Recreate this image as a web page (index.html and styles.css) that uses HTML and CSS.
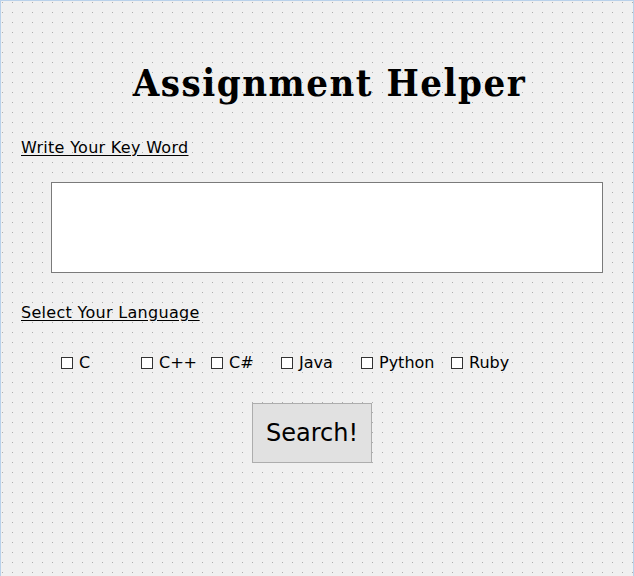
FILE: index.html
```html
<!DOCTYPE html>
<html>
<head>
<meta charset="utf-8">
<link rel="stylesheet" href="styles.css">
</head>
<body>
<div class="form">
  <h1 class="title">Assignment Helper</h1>
  <div class="label label-key">Write Your Key Word</div>
  <div class="textbox"></div>
  <div class="label label-lang">Select Your Language</div>
  <div class="langs">
    <label class="check"><span class="box"></span><span>C</span></label>
    <label class="check"><span class="box"></span><span>C++</span></label>
    <label class="check"><span class="box"></span><span>C#</span></label>
    <label class="check"><span class="box"></span><span>Java</span></label>
    <label class="check"><span class="box"></span><span>Python</span></label>
    <label class="check"><span class="box"></span><span>Ruby</span></label>
  </div>
  <div class="btn-row"><div class="button">Search!</div></div>
</div>
</body>
</html>
```
FILE: styles.css
```css
html, body {
  margin: 0;
  padding: 0;
}
body {
  width: 634px;
  height: 576px;
  overflow: hidden;
  font-family: "DejaVu Sans", sans-serif;
  color: #000;
}
.form {
  box-sizing: border-box;
  width: 634px;
  height: 576px;
  border-top: 1px solid #b9d1ea;
  border-left: 1px solid #b9d1ea;
  border-right: 1px solid #b9d1ea;
  background-color: #f0f0f0;
  background-image:
    repeating-linear-gradient(to right, transparent 0 1px, #f0f0f0 1px 10px),
    repeating-linear-gradient(to bottom, #adadad 0 1px, #f0f0f0 1px 10px);
  background-position: 1px 1px, 1px 1px;
  display: flex;
  flex-direction: column;
  align-items: flex-start;
}
.title {
  margin: 58px 0 0 0;
  align-self: stretch;
  text-align: center;
  padding-left: 25px;
  font-family: "DejaVu Serif", serif;
  font-stretch: condensed;
  font-weight: bold;
  font-size: 38px;
  line-height: 48px;
  letter-spacing: 1.5px;
}
.label {
  margin-left: 20px;
  font-size: 16px;
  line-height: 20px;
  letter-spacing: 0.3px;
  text-decoration: underline;
  text-underline-offset: 2px;
}
.label-key {
  margin-top: 31px;
}
.textbox {
  margin: 24px 0 0 50px;
  width: 550px;
  height: 89px;
  background: #fff;
  border: 1px solid #7a7a7a;
}
.label-lang {
  margin-top: 30px;
}
.langs {
  margin: 30px 0 0 60px;
  display: grid;
  grid-template-columns: 80px 70px 70px 80px 90px auto;
  font-size: 16px;
  line-height: 20px;
}
.check {
  display: flex;
  align-items: center;
  gap: 6px;
}
.box {
  width: 10px;
  height: 10px;
  border: 1px solid #333;
  background: #fff;
}
.btn-row {
  margin: 30px 0 0 251px;
}
.button {
  box-sizing: border-box;
  width: 120px;
  height: 60px;
  background: #e1e1e1;
  border: 1px solid #adadad;
  font-size: 24px;
  display: flex;
  align-items: center;
  justify-content: center;
}
```
